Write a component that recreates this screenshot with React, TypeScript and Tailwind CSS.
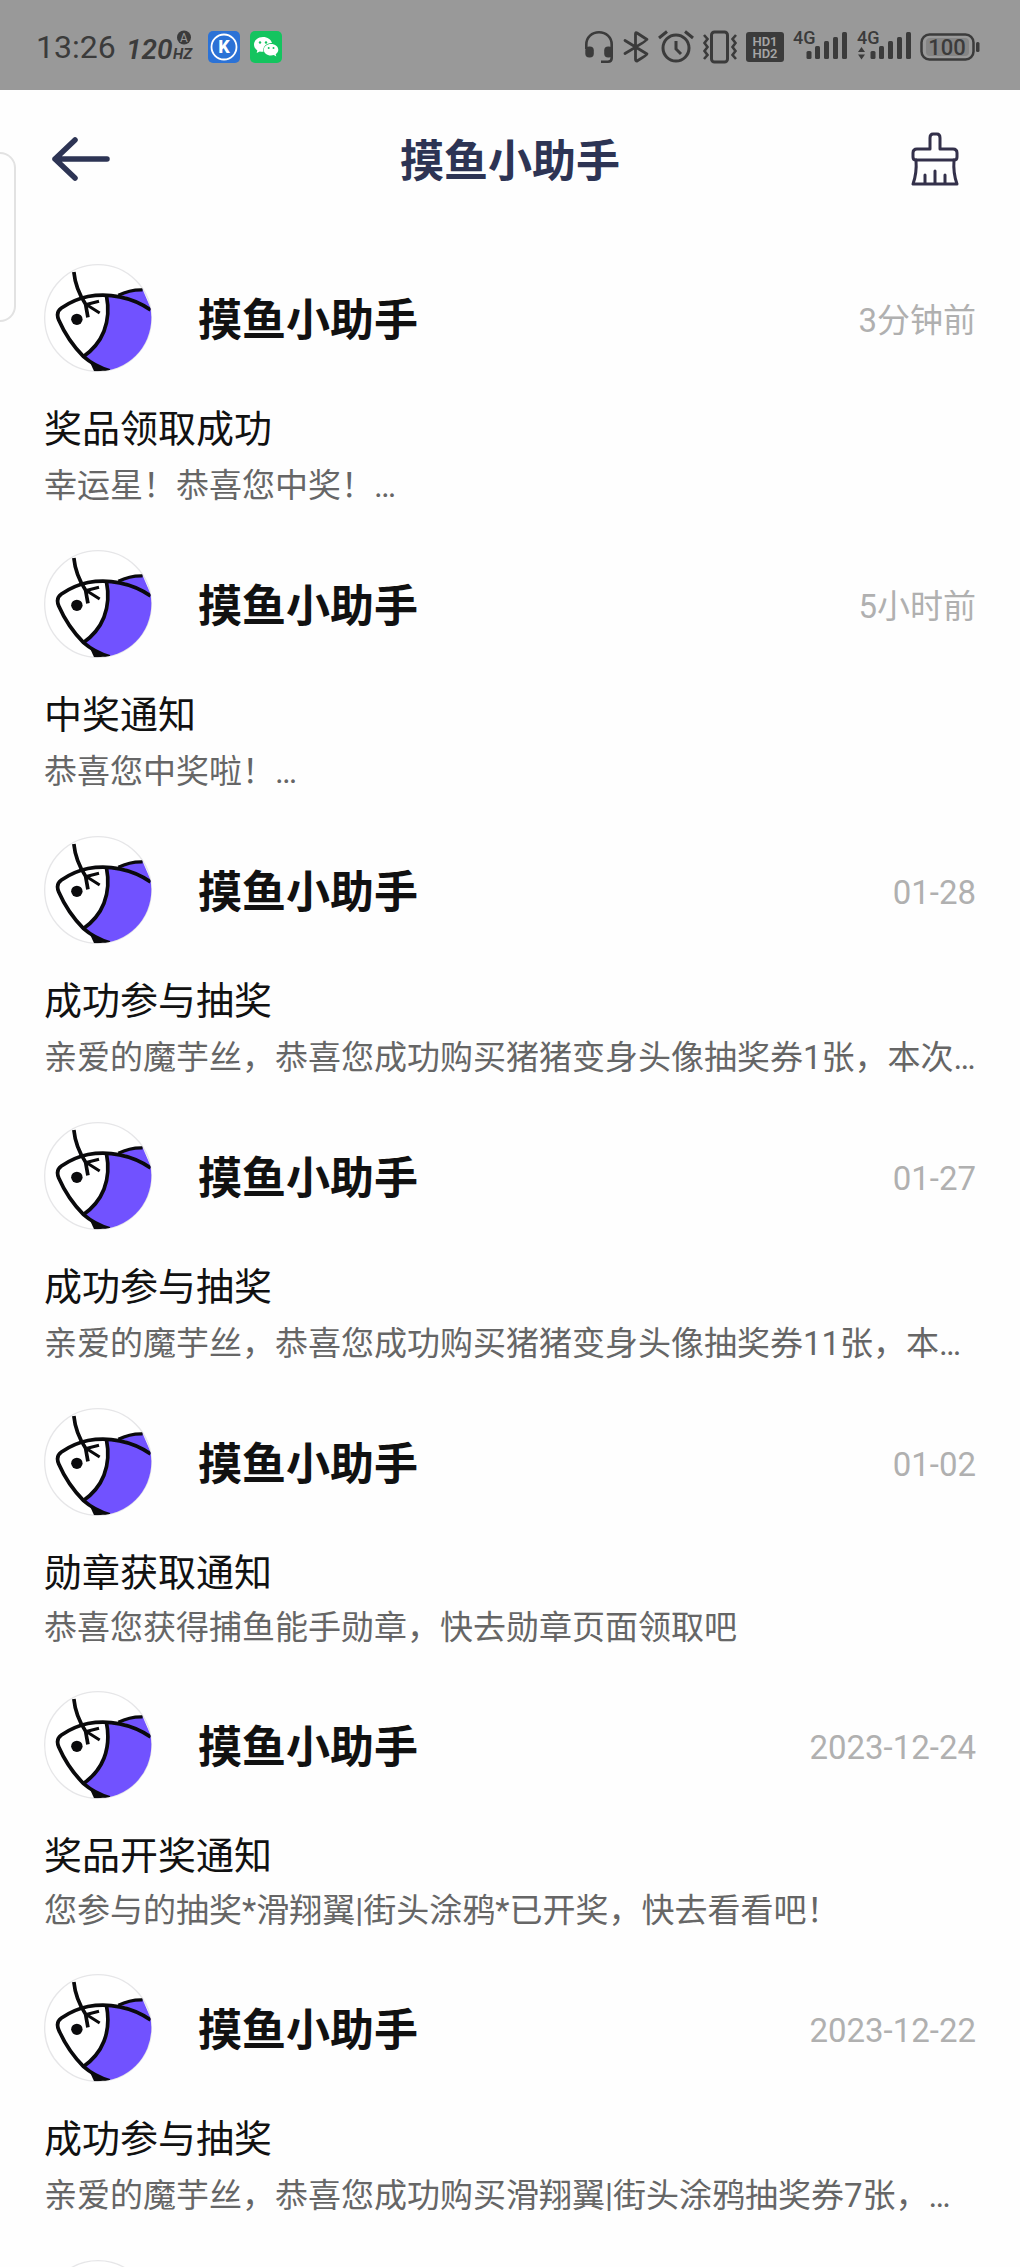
import clsx from 'clsx';

type Message = {
    id: number;
    time?: string;
    title?: string;
    content?: string;
    multiline?: boolean;
};

const SENDER = '摸鱼小助手';

const messages: Message[] = [
    { id: 1, time: '3分钟前', title: '奖品领取成功', content: '幸运星！恭喜您中奖！…', multiline: true },
    { id: 2, time: '5小时前', title: '中奖通知', content: '恭喜您中奖啦！…', multiline: true },
    { id: 3, time: '01-28', title: '成功参与抽奖', content: '亲爱的魔芋丝，恭喜您成功购买猪猪变身头像抽奖券1张，本次…', multiline: true },
    { id: 4, time: '01-27', title: '成功参与抽奖', content: '亲爱的魔芋丝，恭喜您成功购买猪猪变身头像抽奖券11张，本…', multiline: true },
    { id: 5, time: '01-02', title: '勋章获取通知', content: '恭喜您获得捕鱼能手勋章，快去勋章页面领取吧' },
    { id: 6, time: '2023-12-24', title: '奖品开奖通知', content: '您参与的抽奖*滑翔翼|街头涂鸦*已开奖，快去看看吧！' },
    { id: 7, time: '2023-12-22', title: '成功参与抽奖', content: '亲爱的魔芋丝，恭喜您成功购买滑翔翼|街头涂鸦抽奖券7张，…', multiline: true },
    { id: 8 },
];

const FishAvatar = () => (
    <svg viewBox="134 71 322 322" className="size-[108px] shrink-0" aria-hidden="true">
        <defs>
            <clipPath id="avatar-clip">
                <circle cx="295" cy="232" r="159" />
            </clipPath>
        </defs>
        <circle cx="295" cy="232" r="159" fill="#fff" stroke="#e6e6e8" strokeWidth="4" />
        <g clipPath="url(#avatar-clip)">
            <path d="M320 164 Q390 164 452 207 L470 300 L400 400 L322 386 Q285 372 252 347 C300 315 342 265 320 164Z" fill="#7152ff" />
            <path d="M358 163 Q390 146 428 147 L456 212 Q405 174 358 163Z" fill="#7152ff" />
            <g fill="none" stroke="#0a0a0c" strokeWidth="11" strokeLinejoin="round">
                <path d="M452 208 C395 168 325 157 265 168 Q225 176 186 202 Q168 214 178 238 Q205 300 252 347 Q285 376 330 389" />
                <path d="M320 164 C336 245 308 308 250 348" />
                <path d="M356 164 Q390 147 428 148" strokeWidth="10" />
                <path d="M223 95 Q228 145 258 191 L265 230" />
                <path d="M298 182 L260 192 L300 217" strokeWidth="9" />
            </g>
            <path d="M272 366 L322 388 L284 392Z" fill="#0a0a0c" />
            <circle cx="232" cy="236" r="17" fill="#0a0a0c" />
        </g>
    </svg>
);

const Signal = ({ data }: { data?: boolean }) => (
    <svg viewBox="-1 -3 56 40" className="h-10 w-14" fill="#3b3b3b">
        <text x="0" y="14" fontSize="18" fontFamily="Roboto, sans-serif" fontWeight="500">4G</text>
        {data && <path d="M1 22 L4.5 17 L8 22Z M1 24.5 L4.5 29.5 L8 24.5Z" />}
        <rect x="13.500" y="21" width="5" height="8" rx="1.500" />
        <rect x="22" y="16" width="5" height="13" rx="1.500" />
        <rect x="31" y="11" width="5" height="18" rx="1.500" />
        <rect x="40" y="7" width="5" height="22" rx="1.500" />
        <rect x="49" y="2" width="5" height="27" rx="1.500" />
    </svg>
);

const StatusBar = () => (
    <div className="flex h-[90px] shrink-0 items-center justify-between bg-[#999] pt-1 pr-10 pl-9 text-[#3b3b3b]">
        <div className="flex items-center">
            <span className="text-[32px] leading-10">13:26</span>
            <svg viewBox="0 -3 70 40" className="ml-2.5 h-10 w-[70px]" fill="#3b3b3b" fontFamily="Roboto, sans-serif">
                <text x="0" y="29" fontSize="28" fontStyle="italic" fontWeight="600">120</text>
                <text x="47" y="29" fontSize="15" fontStyle="italic" fontWeight="700">HZ</text>
                <circle cx="58" cy="7.500" r="7" />
                <text x="58" y="12" fontSize="12" textAnchor="middle" fill="#999">A</text>
            </svg>
            <svg viewBox="0 0 32 32" className="ml-3 size-8">
                <rect width="32" height="32" rx="5" fill="#2b72d6" />
                <circle cx="16" cy="16" r="12.500" fill="none" stroke="#fff" strokeWidth="1.800" />
                <text x="16" y="22" fontSize="18" fontWeight="800" textAnchor="middle" fill="#fff" fontFamily="Roboto, sans-serif">K</text>
            </svg>
            <svg viewBox="0 0 32 32" className="ml-2.5 size-8">
                <rect width="32" height="32" rx="5" fill="#14c45f" />
                <path d="M13 6 C8 6 4 9.200 4 13.500 C4 16 5.300 18 7.300 19.300 L6.700 22 L9.800 20.400 C11 20.800 12 20.900 13.500 20.800 C12.500 15.500 16.500 11.800 22 12 C21 8.500 17.500 6 13 6Z" fill="#fff" />
                <path d="M21 13 C16.800 13 13.800 15.600 13.800 18.800 C13.800 22 16.800 24.600 21 24.600 C22 24.600 23 24.400 23.800 24.100 L26.300 25.500 L25.700 23.200 C27.300 22.200 28.300 20.600 28.300 18.800 C28.300 15.600 25.200 13 21 13Z" fill="#fff" />
                <g fill="#14c45f">
                    <circle cx="10" cy="11.500" r="1.200" />
                    <circle cx="16" cy="11.500" r="1.200" />
                    <circle cx="18.700" cy="17" r="1" />
                    <circle cx="23.500" cy="17" r="1" />
                </g>
            </svg>
        </div>
        <div className="flex items-center gap-2">
            {/* headset */}
            <svg viewBox="0 0 30 34" className="h-[34px] w-[30px]" fill="none" stroke="#3b3b3b" strokeWidth="2.600">
                <path d="M2.300 19 V14.500 C2.300 7 8 2.300 15 2.300 C22 2.300 27.700 7 27.700 14.500 V28 Q27.700 31.700 24 31.700 H17" />
                <rect x="1.300" y="16.500" width="8.500" height="11" rx="4" fill="#3b3b3b" stroke="none" />
                <rect x="20.200" y="16.500" width="8.500" height="11" rx="4" fill="#3b3b3b" stroke="none" />
            </svg>
            {/* bluetooth */}
            <svg viewBox="0 0 28 34" className="h-[34px] w-7" fill="none" stroke="#3b3b3b" strokeWidth="2.800" strokeLinejoin="round" strokeLinecap="round">
                <path d="M3 10.500 L25 24 Q25 25 15 31 Q13.500 31 13.500 29 V4 Q13.500 2 15 3 L25 9.500 Q25 10.500 3 23.500" />
            </svg>
            {/* alarm */}
            <svg viewBox="0 0 36 34" className="h-[34px] w-9" fill="none" stroke="#3b3b3b" strokeWidth="3">
                <circle cx="18" cy="18" r="13" />
                <path d="M18 11 V19 L23 24 M1 8 L9 1.500 M27 1.500 L35 8" />
            </svg>
            {/* vibrate */}
            <svg viewBox="0 0 36 34" className="h-[34px] w-9" fill="none" stroke="#3b3b3b" strokeWidth="2.600">
                <rect x="9.500" y="2" width="16" height="30" rx="3" strokeWidth="3" />
                <path d="M2 5 L5.500 9 L2.500 13 L5.500 17 L2.500 21 L5.500 25 L2 29 M34 5 L30.500 9 L33.500 13 L30.500 17 L33.500 21 L30.500 25 L34 29" />
            </svg>
            {/* dual sim HD */}
            <svg viewBox="0 0 38 30" className="h-[30px] w-[38px]">
                <rect width="38" height="30" rx="3" fill="#3b3b3b" />
                <g fill="#a5a5a5" fontFamily="Roboto, sans-serif" fontWeight="600" fontSize="13" textAnchor="middle">
                    <text x="19" y="14">HD1</text>
                    <text x="19" y="26">HD2</text>
                </g>
            </svg>
            <Signal />
            <Signal data />
            {/* battery */}
            <svg viewBox="0 0 60 28" className="h-7 w-[60px]">
                <rect x="1.500" y="1.500" width="52" height="25" rx="8" fill="none" stroke="#3b3b3b" strokeWidth="2.500" />
                <rect x="6" y="5" width="43" height="18" rx="4" fill="#858585" />
                <rect x="56" y="9" width="3.500" height="10" rx="1.500" fill="#3b3b3b" />
                <text x="27" y="22" fontSize="22" fontWeight="500" textAnchor="middle" fill="#3b3b3b" fontFamily="Roboto, sans-serif">100</text>
            </svg>
        </div>
    </div>
);

const Header = () => (
    <header className="flex h-[138px] shrink-0 items-center justify-between px-12 text-[#2d3454]">
        <button type="button" aria-label="返回" className="cursor-pointer">
            <svg viewBox="0 0 64 48" className="h-12 w-16" fill="none" stroke="currentColor" strokeWidth="5.500" strokeLinecap="round" strokeLinejoin="round">
                <path d="M27 5 L7 24 L27 43 M7 24 H59" />
            </svg>
        </button>
        <h1 className="pt-1.5 text-[44px] leading-[60px] font-bold">{SENDER}</h1>
        <button type="button" aria-label="清除" className="cursor-pointer">
            <svg viewBox="6 0 64 60" className="h-15 w-16" fill="none" stroke="#33304a" strokeWidth="3" strokeLinejoin="round" strokeLinecap="round">
                <path d="M28 20 V9 Q28 5 31 5 H35 Q38 5 38 9 V20 H51 Q55 20 55 24 V28 Q55 31 52 31 H14 Q11 31 11 28 V24 Q11 20 15 20Z" />
                <path d="M14 31 Q15 44 11 55 H55 Q51 44 52 31 M23 46 V55 M33 42 V55 M43 46 V55" />
            </svg>
        </button>
    </header>
);

const MessageItem = ({ time, title, content, multiline }: Message) => (
    <li className="pb-9">
        <div className="flex items-center">
            <FishAvatar />
            {title && <h2 className="ml-[46px] flex-1 pt-1.5 text-[44px] leading-[60px] font-bold text-[#111]">{SENDER}</h2>}
            {time && <time className="pt-1.5 text-[33px] leading-10 text-[#b0b0b0]">{time}</time>}
        </div>
        {title && <h3 className="mt-[29px] text-[38px] leading-14 text-[#111]">{title}</h3>}
        {content && (
            <p className={clsx('truncate text-[33px] text-[#666]', multiline ? 'leading-[57px]' : 'leading-[54px]')}>{content}</p>
        )}
    </li>
);

export default function App() {
    return (
        <div lang="zh-CN" className="relative flex h-screen flex-col overflow-hidden bg-[#fefefe] font-[Roboto,'Noto_Sans_CJK_SC',sans-serif]">
            <StatusBar />
            <Header />
            {/* edge panel handle */}
            <div className="absolute top-[152px] left-0 h-[170px] w-4 rounded-r-[20px] border-2 border-l-0 border-[#e2e2e2]" />
            <ul className="min-h-0 flex-1 overflow-y-auto px-11 pt-9 [scrollbar-width:none]">
                {messages.map((message) => (
                    <MessageItem key={message.id} {...message} />
                ))}
            </ul>
        </div>
    );
}
